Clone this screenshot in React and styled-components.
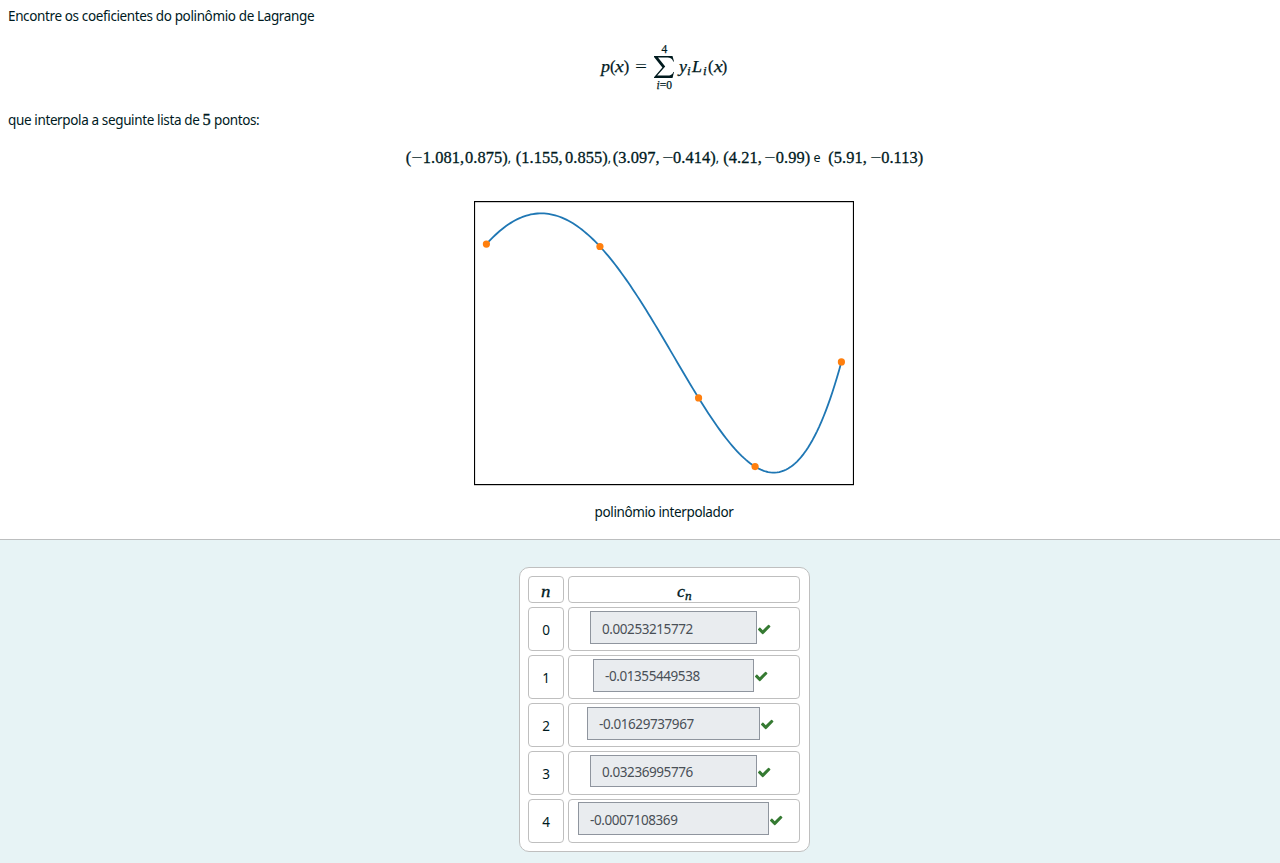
import React from "react";
import styled, { createGlobalStyle } from "styled-components";

const GlobalStyle = createGlobalStyle`
  * { box-sizing: border-box; }
  html, body { margin: 0; height: 863px; overflow: hidden; background: #fff; }
  body { font: 13.5px/21px "Noto Sans", "Open Sans", sans-serif; color: #001a1e; }
`;

const Page = styled.main`
  width: 1328px;
  height: 863px;
  display: flex;
  flex-direction: column;
`;

const Question = styled.section`
  height: 539px;
  padding: 6px 8px 0;
  display: flex;
  flex-direction: column;
`;

const Paragraph = styled.p`
  margin: 0;
  height: 21px;
  font-size: 13.5px;
  letter-spacing: -0.37px;
  white-space: pre;
`;

const Tex = styled.span`
  font-family: "Liberation Serif", serif;
  font-size: 16.4px;
  letter-spacing: 0.06px;
  -webkit-text-stroke: 0.3px currentColor;
`;

const Var = styled.i`
  display: inline-block;
  transform: scaleX(${(p) => p.$stretch || 1.1});
  transform-origin: left;
  padding-right: 1px;
`;

const Formula = styled.div`
  height: 46px;
  margin: 17px 0 19px;
  display: flex;
  justify-content: center;
  align-items: center;
  font-family: "Liberation Serif", serif;
  font-size: 16.4px;
  line-height: 20px;
  -webkit-text-stroke: 0.25px currentColor;
`;

const Side = styled.span`
  width: ${(p) => p.$w}px;
  height: 20px;
  display: flex;
  justify-content: space-between;
  white-space: nowrap;
`;

const Equals = styled.span`
  width: 14px;
  transform: scaleX(1.3);
  transform-origin: left;
  -webkit-text-stroke: 0;
`;

const Sub = styled.sub`
  display: inline-block;
  font-size: 11.5px;
  line-height: 0;
  vertical-align: -3px;
  font-style: italic;
  transform: scaleX(1.15);
  transform-origin: left;
`;

const Sum = styled.span`
  width: 23px;
  margin: 0 3px 0 4px;
  display: flex;
  flex-direction: column;
  align-items: center;
`;

const Limit = styled.span`
  height: 10px;
  font-size: 11.5px;
  line-height: 10px;
  white-space: nowrap;
`;

const Points = styled.div`
  height: 22px;
  margin: 17px 0 32px;
  padding-left: 1px;
  display: flex;
  justify-content: center;
  line-height: 22px;
`;

const Point = styled.span`
  width: ${(p) => p.$w}px;
  display: flex;
  justify-content: space-between;
  white-space: nowrap;
`;

const Minus = styled.span`
  display: inline-block;
  width: 11.5px;
  transform: scaleX(1.25);
  transform-origin: left;
  -webkit-text-stroke: 0;
`;

const Separator = styled.span`
  width: ${(p) => p.$w}px;
  font-size: 12.5px;
`;

const Plot = styled.svg`
  display: block;
  margin: 0 auto;
`;

const Caption = styled.div`
  margin-top: 16px;
  text-align: center;
  font-size: 13.5px;
  letter-spacing: -0.38px;
`;

const Answers = styled.section`
  flex: 1;
  border-top: 1px solid #bcbebf;
  background: #e7f3f5;
  padding: 27px 0 0 519px;
`;

const Grid = styled.div`
  width: 291px;
  height: 285px;
  padding: 8px;
  border: 1px solid #bfbfbf;
  border-radius: 10px;
  background: #fff;
  display: grid;
  grid-template-columns: 36px 232px;
  grid-template-rows: 27px repeat(5, 44px);
  gap: 4px;
`;

const Cell = styled.div`
  border: 1px solid #bfbfbf;
  border-radius: 4px;
  display: flex;
  justify-content: center;
  align-items: ${(p) => (p.$entry ? "flex-start" : "center")};
  padding-top: ${(p) => p.$top || 0}px;
`;

const Field = styled.div`
  width: ${(p) => p.$w}px;
  height: ${(p) => p.$h}px;
  border: 1px solid #8f959e;
  background: #e9ecef;
  color: #495057;
  padding-left: 11px;
  line-height: ${(p) => p.$line || 33}px;
  font-size: 13.5px;
  letter-spacing: -0.42px;
`;

const Mark = styled.span`
  width: 21px;
  height: 33px;
  padding: ${(p) => p.$top}px 0 0;
  color: #357a32;
  line-height: 0;
`;

const data = [
  [-1.081, 0.875],
  [1.155, 0.855],
  [3.097, -0.414],
  [4.21, -0.99],
  [5.91, -0.113],
];

const lagrange = (x) =>
  data.reduce(
    (sum, [xi, yi], i) =>
      sum + data.reduce((t, [xj], j) => (i === j ? t : (t * (x - xj)) / (xi - xj)), yi),
    0
  );

const px = (x) => 12.4 + (x + 1.081) * 50.78;
const py = (y) => 43.1 + (0.875 - y) * 119.3;

const curve = Array.from({ length: 161 }, (_, k) => {
  const x = -1.081 + (6.991 * k) / 160;
  return `${px(x).toFixed(2)},${py(lagrange(x)).toFixed(2)}`;
}).join(" ");

const pairs = [
  { w: 102, x: ["-", "1.081"], y: ["", "0.875"], sep: ",", sw: 8 },
  { w: 92, x: ["", "1.155"], y: ["", "0.855"], sep: ",", sw: 5 },
  { w: 103, x: ["", "3.097"], y: ["-", "0.414"], sep: ",", sw: 7.5 },
  { w: 87, x: ["", "4.21"], y: ["-", "0.99"], sep: "e", sw: 18 },
  { w: 95, x: ["", "5.91"], y: ["-", "0.113"] },
];

const entries = [
  { value: "0.00253215772", w: 167, h: 33, top: 3, line: 34, mark: 10.7 },
  { value: "-0.01355449538", w: 161, h: 33, top: 3, line: 33, mark: 9.9 },
  { value: "-0.01629737967", w: 173, h: 33, top: 3, line: 33, mark: 9.9 },
  { value: "0.03236995776", w: 167, h: 32, top: 3, line: 33, mark: 9.9 },
  { value: "-0.0007108369", w: 191, h: 33, top: 2, line: 34, mark: 10.9 },
];

const Check = () => (
  <svg width="14.4" height="14.4" viewBox="0 0 1792 1792" fill="currentColor">
    <path d="M1671 566q0 40-28 68l-724 724-136 136q-28 28-68 28t-68-28l-136-136-362-362q-28-28-28-68t28-68l136-136q28-28 68-28t68 28l294 295 656-657q28-28 68-28t68 28l136 136q28 28 28 68z" />
  </svg>
);

const Num = ({ parts }) => (
  <>
    {parts[0] && <Minus>−</Minus>}
    {parts[1]}
  </>
);

export default function App() {
  return (
    <>
      <GlobalStyle />
      <Page>
        <Question>
          <Paragraph>Encontre os coeficientes do polinômio de Lagrange</Paragraph>
          <Formula>
            <Side $w={48}>
              <span>
                <Var>p</Var>(<Var $stretch={1.2}>x</Var>)
              </span>
              <Equals>=</Equals>
            </Side>
            <Sum>
              <Limit>4</Limit>
              <svg width="22" height="26" viewBox="0 0 22 26">
                <path
                  d="M1 2H19.5L21 7.5H20.2C19.4 4.6 17.5 3.5 13.5 3.5H5L12.2 12.6L4.2 21.6H13.5C17.6 21.6 19.4 20.6 20.3 18H21L19.5 24H1V23.2L9.4 13.6L1 2.9Z"
                  fill="currentColor"
                />
              </svg>
              <Limit>
                <i>i</i>=0
              </Limit>
            </Sum>
            <Side $w={48.5}>
              <span>
                <Var>y</Var>
                <Sub>i</Sub>
              </span>
              <span>
                <Var>L</Var>
                <Sub>i</Sub>
              </span>
              <span>
                (<Var $stretch={1.2}>x</Var>)
              </span>
            </Side>
          </Formula>
          <Paragraph>
            que interpola a seguinte lista de <Tex>5</Tex> pontos:
          </Paragraph>
          <Points>
            {pairs.map((p) => (
              <React.Fragment key={p.x[1]}>
                <Point $w={p.w}>
                  <Tex>
                    (<Num parts={p.x} />,
                  </Tex>
                  <Tex>
                    <Num parts={p.y} />)
                  </Tex>
                </Point>
                {p.sep && (
                  <Separator $w={p.sw}>
                    {p.sep === "e" ? "\u00a0e" : p.sep}
                  </Separator>
                )}
              </React.Fragment>
            ))}
          </Points>
          <Plot width="380" height="285" viewBox="0 0 380 285">
            <rect x="0.5" y="0.6" width="379" height="283" fill="none" stroke="#000" strokeWidth="1.2" />
            <polyline points={curve} fill="none" stroke="#1f77b4" strokeWidth="1.8" strokeLinejoin="round" />
            {data.map(([x, y]) => (
              <circle key={x} cx={px(x)} cy={py(y)} r="3.6" fill="#ff7f0e" />
            ))}
          </Plot>
          <Caption>polinômio interpolador</Caption>
        </Question>
        <Answers>
          <Grid>
            <Cell $top={4}>
              <Tex>
                <Var $stretch={1.15}>n</Var>
              </Tex>
            </Cell>
            <Cell $top={4}>
              <Tex>
                <Var>c</Var>
                <Sub>n</Sub>
              </Tex>
            </Cell>
            {entries.map((e, i) => (
              <React.Fragment key={e.value}>
                <Cell $top={3}>{i}</Cell>
                <Cell $entry $top={e.top}>
                  <Field $w={e.w} $h={e.h} $line={e.line}>
                    {e.value}
                  </Field>
                  <Mark $top={e.mark}>
                    <Check />
                  </Mark>
                </Cell>
              </React.Fragment>
            ))}
          </Grid>
        </Answers>
      </Page>
    </>
  );
}
